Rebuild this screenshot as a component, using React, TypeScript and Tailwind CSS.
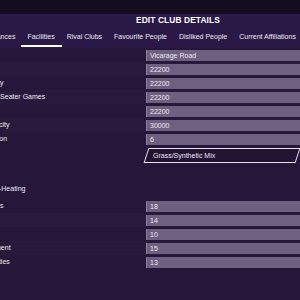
import React from 'react';

type Row = { label: string; value: string };

const topRows: Row[] = [
  { label: 'Stadium', value: 'Vicarage Road' },
  { label: 'Capacity', value: '22200' },
  { label: 'Safe Capacity', value: '22200' },
  { label: 'Required All-Seater Games', value: '22200' },
  { label: 'Seating', value: '22200' },
  { label: 'Future Capacity', value: '30000' },
  { label: 'Pitch Condition', value: '6' },
];

const bottomRows: Row[] = [
  { label: 'Club Facilities', value: '18' },
  { label: 'Training', value: '14' },
  { label: 'Academy', value: '10' },
  { label: 'Pro Recruitment', value: '15' },
  { label: 'Family Facilities', value: '13' },
];

const tabs = ['Finances', 'Facilities', 'Rival Clubs', 'Favourite People', 'Disliked People', 'Current Affiliations'];

const FieldRow = ({ row, odd }: { row: Row; odd: boolean }) => (
  <div className={`flex items-center h-[14px] ${odd ? 'bg-white/[0.015]' : ''}`}>
    <div className="w-[186px] shrink-0 ml-[-40px] whitespace-nowrap text-[7px] leading-[14px]">{row.label}</div>
    <div className="flex-1 mr-[-40px] h-[11px] bg-[#6d6080] border-l border-[#8a7e9c] pl-[3px] text-[7px] leading-[11px] text-[#eeeaf4]">
      {row.value}
    </div>
  </div>
);

export default function App() {
  return (
    <div className="w-[300px] h-[300px] overflow-hidden bg-[#24173a] text-[#ece8f2] font-['Liberation_Sans',Arial,sans-serif]">
      {/* top strip */}
      <div className="h-[14px] bg-[#140c1f]" />

      {/* header */}
      <div className="h-[34px] bg-[#2a1946]">
        <div className="h-[14px] pl-[136px] text-[8.4px] font-bold leading-[12px] tracking-[0.1px] text-white">
          EDIT CLUB DETAILS
        </div>
        <div className="flex h-[20px] ml-[-19px] whitespace-nowrap">
          {tabs.map((t) => (
            <div key={t} className="relative px-[6px] text-[7px] leading-[18px]">
              {t}
              {t === 'Facilities' && (
                <div className="absolute left-0 right-[-1px] bottom-[1px] h-[2px] bg-white" />
              )}
            </div>
          ))}
        </div>
      </div>

      {/* fields */}
      <div>
        {topRows.map((r, i) => (
          <FieldRow key={r.label} row={r} odd={i % 2 === 1} />
        ))}

        <div className="flex items-start h-[19px] pt-[2px]">
          <div className="w-[186px] shrink-0 ml-[-40px] whitespace-nowrap text-[7px] leading-[15px]">Pitch Type</div>
          <div className="relative w-[152px] h-[15px] pl-[7px] text-[7px] leading-[15px]">
            <div className="absolute inset-0 -skew-x-[18deg] border border-[#e8e4ef] bg-[#211433]" />
            <span className="relative">Grass/Synthetic Mix</span>
          </div>
        </div>

        <div className="h-[17px]" />

        <div className="h-[17px] ml-[-38px] whitespace-nowrap text-[7px] leading-[14px]">Under-Pitch-Heating</div>

        {bottomRows.map((r, i) => (
          <FieldRow key={r.label} row={r} odd={i % 2 === 1} />
        ))}
      </div>
    </div>
  );
}
